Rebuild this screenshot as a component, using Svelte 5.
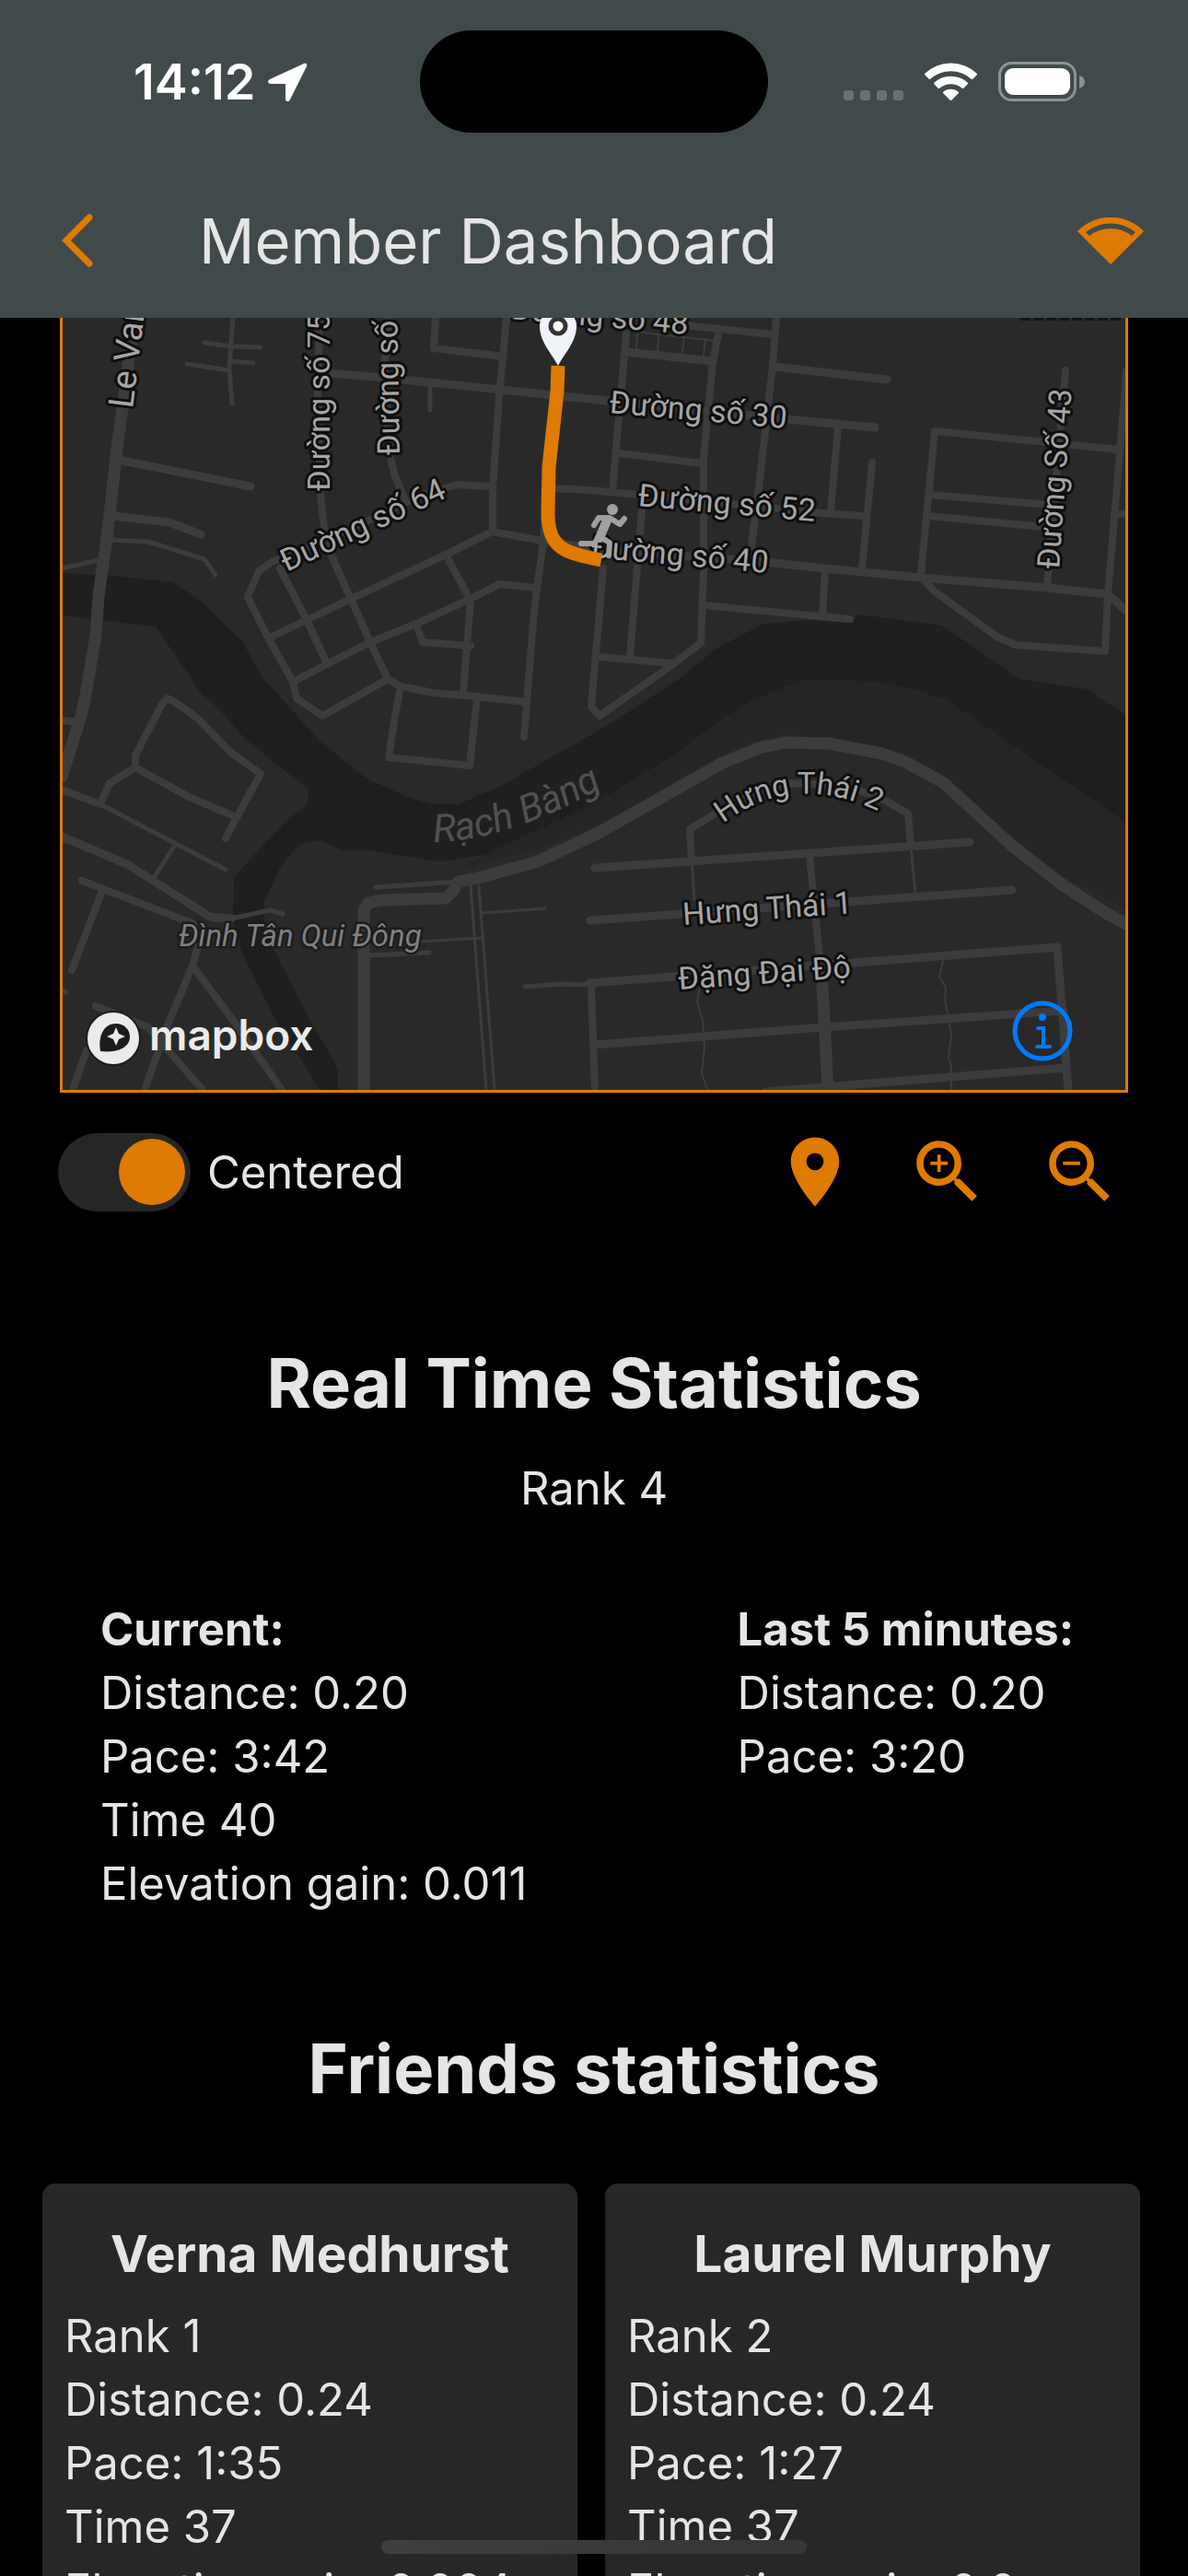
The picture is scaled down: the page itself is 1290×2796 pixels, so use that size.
<script>
    let centered = $state(true);

    const current = ['Distance: 0.20', 'Pace: 3:42', 'Time 40', 'Elevation gain: 0.011'];
    const lastMinutes = ['Distance: 0.20', 'Pace: 3:20'];

    const friends = [
        { name: 'Verna Medhurst', stats: ['Rank 1', 'Distance: 0.24', 'Pace: 1:35', 'Time 37', 'Elevation gain: 0.004'] },
        { name: 'Laurel Murphy', stats: ['Rank 2', 'Distance: 0.24', 'Pace: 1:27', 'Time 37', 'Elevation gain: 0.0'] }
    ];

    // Roads grouped by stroke width
    const roads = [
        { width: 2, lines: [
            '761,1067 757,1087 763,1107 765,1137 762,1165 768,1182',
            '1024,1043 1020,1060 1027,1072 1026,1085 1033,1123 1030,1147 1033,1157 1033,1183',
            '692,362 691,378', '715,365 714,381', '743,365 741,382', '766,368 764,386', '690,360 776,370'
        ] },
        { width: 3, lines: [
            '511,962 528,1183', '520,962 537,1183', '523,991 592,986', '458,1022 524,1018',
            '989,918 994,970', '751,933 754,977'
        ] },
        { width: 5, lines: [
            '253,345 249,400 252,438', '222,372 251,376 283,377', '203,395 249,402', '251,392 275,394',
            '119,586 161,588 222,607 234,624', '67,617 107,608', '467,420 467,445',
            '109,873 245,944', '190,917 167,953', '251,997 293,988 307,992', '408,963 498,957',
            '400,1037 466,1034', '570,1071 609,1068 637,1069', '67,1074 72,1077'
        ] },
        { width: 8, lines: [
            '347,345 345,430 348,537 354,590 381,650 402,697 421,737 435,745 471,752 517,756 572,762',
            '423,345 417,397 423,493 429,517 440,543',
            '534,528 496,526 456,538 394,568 295,610 281,620 269,648 291,692 318,740 322,758 350,777 421,737',
            '304,617 333,673 354,718', '293,692 381,650 484,602 534,577 590,587',
            '484,602 511,652 503,752', '318,740 402,697 452,677 511,650 542,634 582,638',
            '452,678 459,697 511,701', '473,345 471,378 547,387', '550,345 542,430 535,530 535,577',
            '601,530 640,532 695,537 893,557 938,560', '601,430 590,587 580,663 569,800',
            '435,745 429,777 422,822 510,831 518,757',
            '655,617 642,767 651,777 728,723 761,698 764,620 764,497 774,393 780,362',
            '651,713 730,720', '680,362 665,533', '743,353 839,363', '843,345 839,397 824,530 816,593',
            '673,492 762,503', '910,463 902,555', '947,502 936,618', '697,553 684,713',
            '764,657 923,672', '896,620 893,667', '1215,488 1015,468 1000,623',
            '1009,537 1141,548', '1009,560 1134,572', '1157,402 1137,637',
            '1223,403 1216,490 1203,645 1200,707 1103,700 1084,692 1015,642 1000,627', '1214,558 1223,558',
            '67,782 78,783', '109,872 119,850 147,833 147,820 176,764 182,758 190,762 215,780 251,817 283,840 257,887 245,910',
            '147,833 205,865 257,887', '67,857 109,873', '89,956 211,1003', '111,967 78,1053',
            '215,1027 209,1048 182,1113 157,1183', '209,1048 255,1110 306,1183',
            '104,1092 161,1115 220,1183', '94,1140 79,1183',
            '751,933 749,900 782,880 824,858 854,850 916,852 958,867 986,883 989,918',
            '879,928 893,1070', '642,1072 646,1182'
        ] },
        { width: 9, lines: [
            '128,499 272,528', '123,560 184,567 218,580', '356,405 417,410 544,423 659,435 854,455 950,464',
            '680,382 774,392', '841,398 963,412', '590,587 655,597 831,610 896,617 1000,627 1137,638 1203,645 1223,663',
            '67,908 138,938 228,995 251,997', '646,942 1053,914', '641,999 1099,966',
            '640,1067 1148,1028 1160,1183', '646,1134 894,1115 1155,1097', '831,1185 1157,1159'
        ] },
        { width: 13, lines: [
            '146,345 140,390 127,487 117,577 107,647 104,690 92,760 88,777 67,843', '893,1070 899,1183',
            '395,1183 395,988 400,980 414,977 484,975 492,967 498,957 519,953 584,935 650,904 785,828 824,812 852,806 900,807 958,818 983,827 1025,850 1099,918 1153,960 1199,990 1223,1003'
        ] }
    ];

    const labels = [
        { text: 'Le Van', x: 144, y: 444, angle: -83, size: 38 },
        { text: 'Đường số 75', x: 358, y: 533, angle: -90 },
        { text: 'Đường số 73', x: 434, y: 494, angle: -91 },
        { text: 'Đường số 64', x: 311, y: 621, angle: -25 },
        { text: 'Đường số 48', x: 554, y: 346, angle: 5 },
        { text: 'Đường số 30', x: 661, y: 448, angle: 5 },
        { text: 'Đường số 52', x: 692, y: 549, angle: 5 },
        { text: 'Đường số 40', x: 641, y: 605, angle: 5 },
        { text: 'Đường Số 43', x: 1150, y: 618, angle: -86 },
        { text: 'Hưng Thái 1', x: 742, y: 1004, angle: -4 },
        { text: 'Đặng Đại Độ', x: 737, y: 1074, angle: -4 }
    ];
</script>

<div class="screen">
    <header>
        <div class="status-bar">
            <div class="status-left">
                <span class="time">14:12</span>
                <svg width="44" height="42" viewBox="0 0 44 42" fill="#fff" aria-hidden="true">
                    <path d="M39 1 2 18c-3 2-2 5 1 5h15c1 0 1 0 1 1v15c0 4 4 4 5 1L42 4c1-3-1-4-3-3z" />
                </svg>
            </div>
            <div class="island"></div>
            <div class="status-right">
                <svg width="262" height="44" viewBox="0 0 262 44" aria-hidden="true">
                    <g fill="#697172">
                        <rect x="0" y="31" width="11" height="11" rx="3" />
                        <rect x="18" y="31" width="11" height="11" rx="3" />
                        <rect x="36" y="31" width="11" height="11" rx="3" />
                        <rect x="54" y="31" width="11" height="11" rx="3" />
                    </g>
                    <g fill="#fff">
                        <path d="M88 13a41 41 0 0 1 57 0v1l-5 5h-1a33 33 0 0 0-45 0h-1l-5-5z" />
                        <path d="M98 23a27 27 0 0 1 37 0v1l-5 5h-1a19 19 0 0 0-25 0h-1l-5-5z" />
                        <path d="M108 33a13 13 0 0 1 17 0v1l-8 8h-1l-8-8z" />
                        <rect x="175" y="7" width="71" height="29" rx="9" />
                    </g>
                    <rect x="169.5" y="1.5" width="82" height="40" rx="13" fill="none" stroke="#8d9293" stroke-width="3" />
                    <path d="M256 15c8 3 8 11 0 14z" fill="#8d9293" />
                </svg>
            </div>
        </div>
        <div class="app-bar">
            <button class="back" aria-label="Back">
                <svg width="34" height="58" viewBox="0 0 34 58" fill="none" stroke="#df7a03" stroke-width="7" stroke-linecap="round" stroke-linejoin="miter" aria-hidden="true">
                    <path d="M30 4 5 29l25 25" />
                </svg>
            </button>
            <h1>Member Dashboard</h1>
            <button class="signal" aria-label="Connection">
                <svg width="72" height="51" viewBox="0 0 72 51" fill="#df7a03" fill-rule="evenodd" aria-hidden="true">
                    <path d="M0 15a50 50 0 0 1 72 0L36 51zM9 16l4 4a37 37 0 0 1 46 0l4-4a43 43 0 0 0-54 0z" />
                </svg>
            </button>
        </div>
    </header>

    <main>
        <section class="map">
            <svg class="map-canvas" viewBox="68 345 1154 838" role="img" aria-label="Route map">
                <path class="water" d="M67 622 120 625 188 632 215 650 262 695 285 735 318 772 348 805 398 845 442 865 469 873 498 873 544 853 650 793 690 768 743 733 776 705 829 677 877 673 923 676 933 667 1023 679 1107 737 1180 748 1223 777V893L1055 778 1028 760 988 747 940 739 872 738 812 762 785 780 728 822 640 875 525 928 477 935 400 923 371 923 348 912 324 917 304 942 287 978 287 1000 297 1030 331 1097 367 1160V1183H348L301 1110 264 1037 253 1000 254 953 272 932 310 892 333 874 335 857 266 802 238 770 218 752 169 680 67 668z" />
                <path class="bank" d="M1223 893 1055 778 1028 760 988 747 940 739 872 738 812 762 785 780 728 822 640 875 525 928 502 943 590 920 650 895 782 820 816 805 850 798 904 800 984 818 1027 843 1099 908 1153 950 1223 987z" />

                {#each roads as group}
                    <g class="roads" stroke-width={group.width}>
                        {#each group.lines as points}
                            <polyline {points} />
                        {/each}
                    </g>
                {/each}

                <path d="M1108 346H1218" stroke="#141414" stroke-width="4" stroke-dasharray="11 3" />

                {#each labels as label}
                    <text class="street" font-size={label.size ?? 34} transform="translate({label.x} {label.y}) rotate({label.angle})">{label.text}</text>
                {/each}

                <path id="hung-thai" d="M785 894Q866 832 968 888" fill="none" />
                <text class="street" font-size="33"><textPath href="#hung-thai">Hưng Thái 2</textPath></text>
                <path id="rach-bang" d="M471 914Q560 912 672 844" fill="none" />
                <text class="river" font-size="42"><textPath href="#rach-bang">Rạch Bàng</textPath></text>
                <text class="place" font-size="33" x="194" y="1027">Đình Tân Qui Đông</text>

                <g fill="none" stroke="#a0a0a0" stroke-width="6" stroke-linecap="round" stroke-linejoin="round">
                    <circle cx="665" cy="553" r="6" fill="#a0a0a0" stroke="none" />
                    <path d="M645 570 650 562H662L673 569 678 563" />
                    <path d="M659 565 651 584" stroke-width="10" />
                    <path d="M650 583 645 590H631M652 583 662 589 661 603" />
                </g>

                <path d="M606 397 605 425 596 507 595 557C595 596 614 600 653 608" fill="none" stroke="#df7a03" stroke-width="15" />
                <path d="M606 397C600 385 586 371 586 354 586 330 626 330 626 354 626 371 612 385 606 397z" fill="#eff3f9" />
                <circle cx="606" cy="354" r="8" fill="#fff" stroke="#333" stroke-width="5" />
            </svg>

            <a class="mapbox" href="#mapbox">
                <svg width="60" height="60" viewBox="0 0 60 60" aria-hidden="true">
                    <circle cx="30" cy="30" r="29" fill="#ebebeb" stroke="#1c1c1c" stroke-width="2" />
                    <path d="M16 44C13 27 20 14 33 14c9 0 15 7 15 14 0 13-15 18-32 16z" fill="#1c1c1c" />
                    <path d="M33 18l3 7 7 3-7 3-3 7-3-7-7-3 7-3z" fill="#ebebeb" />
                </svg>
                <span>mapbox</span>
            </a>
            <button class="info" aria-label="Map information">
                <svg width="66" height="66" viewBox="0 0 66 66" fill="none" stroke="#007aff" stroke-width="5" stroke-linecap="round" aria-hidden="true">
                    <circle cx="33" cy="33" r="30" />
                    <circle cx="33" cy="18" r="4" fill="#007aff" stroke="none" />
                    <path d="M28 30h6v19M27 50h14" stroke-width="4" />
                </svg>
            </button>
        </section>

        <div class="controls">
            <label>
                <input type="checkbox" role="switch" bind:checked={centered} />
                Centered
            </label>
            <div class="actions">
                <button aria-label="Show location">
                    <svg viewBox="0 0 24 24" aria-hidden="true">
                        <path d="M12 2C8.13 2 5 5.13 5 9c0 5.25 7 13 7 13s7-7.75 7-13c0-3.87-3.13-7-7-7zm0 9.5a2.5 2.5 0 0 1 0-5 2.5 2.5 0 0 1 0 5z" />
                    </svg>
                </button>
                <button aria-label="Zoom in">
                    <svg viewBox="0 0 24 24" aria-hidden="true">
                        <path d="M15.5 14h-.79l-.28-.27C15.41 12.59 16 11.11 16 9.5 16 5.91 13.09 3 9.5 3S3 5.91 3 9.5 5.91 16 9.5 16c1.61 0 3.09-.59 4.23-1.57l.27.28v.79l5 4.99L20.49 19l-4.99-5zm-6 0C7.01 14 5 11.99 5 9.5S7.01 5 9.5 5 14 7.01 14 9.5 11.99 14 9.5 14z" />
                        <path d="M12 10h-2v2H9v-2H7V9h2V7h1v2h2v1z" />
                    </svg>
                </button>
                <button aria-label="Zoom out">
                    <svg viewBox="0 0 24 24" aria-hidden="true">
                        <path d="M15.5 14h-.79l-.28-.27C15.41 12.59 16 11.11 16 9.5 16 5.91 13.09 3 9.5 3S3 5.91 3 9.5 5.91 16 9.5 16c1.61 0 3.09-.59 4.23-1.57l.27.28v.79l5 4.99L20.49 19l-4.99-5zm-6 0C7.01 14 5 11.99 5 9.5S7.01 5 9.5 5 14 7.01 14 9.5 11.99 14 9.5 14z" />
                        <path d="M7 9h5v1H7z" />
                    </svg>
                </button>
            </div>
        </div>

        <section>
            <h2>Real Time Statistics</h2>
            <p class="rank">Rank 4</p>
            <div class="stats">
                <div>
                    <h3>Current:</h3>
                    {#each current as line}
                        <p>{line}</p>
                    {/each}
                </div>
                <div>
                    <h3>Last 5 minutes:</h3>
                    {#each lastMinutes as line}
                        <p>{line}</p>
                    {/each}
                </div>
            </div>
        </section>

        <section>
            <h2>Friends statistics</h2>
            <div class="friends">
                {#each friends as friend}
                    <article>
                        <h3>{friend.name}</h3>
                        {#each friend.stats as line}
                            <p>{line}</p>
                        {/each}
                    </article>
                {/each}
            </div>
        </section>
    </main>

    <div class="home-indicator"></div>
</div>

<style>
    :global(body) {
        background-color: #000;
    }

    .screen {
        height: 100vh;
        overflow: hidden;
        position: relative;
        color: #e5e5e5;
        background-color: #000;
        font-family: Inter, Roboto, sans-serif;
        font-size: 49px;
        line-height: 69px;
    }

    h1, h2, h3, p {
        margin: 0;
    }

    button {
        display: flex;
        align-items: center;
        justify-content: center;
        padding: 0;
        border: none;
        background: none;
        cursor: pointer;
    }

    header {
        background-color: #414a4b;
    }

    .status-bar {
        display: grid;
        grid-template-columns: 1fr 378px 1fr;
        align-items: center;
        padding: 33px 0;
    }

    .status-left {
        display: flex;
        align-items: center;
        gap: 13px;
        padding-left: 145px;
    }

    .time {
        font-size: 54px;
        font-weight: 600;
        color: #fff;
    }

    .island {
        height: 111px;
        border-radius: 56px;
        background-color: #000;
    }

    .status-right {
        display: flex;
        justify-content: flex-end;
        padding-right: 112px;
    }

    .app-bar {
        display: flex;
        align-items: center;
        height: 168px;
        padding-right: 12px;
    }

    .back {
        width: 168px;
        height: 144px;
    }

    .signal {
        width: 144px;
        height: 144px;
    }

    h1 {
        flex: 1;
        padding-left: 48px;
        font-size: 67px;
        font-weight: 400;
    }

    .map {
        position: relative;
        margin: 0 65px;
        border: 3px solid #df7a03;
        border-top: none;
        background-color: #292929;
    }

    .map-canvas {
        display: block;
        width: 100%;
        height: auto;
        font-family: Roboto, "Noto Sans", sans-serif;
    }

    .water {
        fill: #1f1f1f;
    }

    .bank {
        fill: #272425;
    }

    .roads {
        fill: none;
        stroke: #3c3c3c;
        stroke-linecap: round;
        stroke-linejoin: round;
    }

    .street {
        fill: #a6a6a6;
        stroke: #0e0e0e;
        stroke-width: 6px;
        stroke-linejoin: round;
        paint-order: stroke;
    }

    .river {
        fill: #515151;
        font-style: italic;
    }

    .place {
        fill: #808080;
        stroke: #1c1c1c;
        stroke-width: 5px;
        paint-order: stroke;
        font-style: italic;
    }

    .mapbox {
        position: absolute;
        left: 25px;
        bottom: 26px;
        display: flex;
        align-items: center;
        gap: 9px;
        height: 60px;
        color: #ebebeb;
        font-size: 46px;
        font-weight: 600;
        text-decoration: none;
    }

    .mapbox span {
        padding-bottom: 8px;
    }

    .info {
        position: absolute;
        right: 57px;
        bottom: 31px;
    }

    .controls {
        display: flex;
        align-items: center;
        justify-content: space-between;
        margin-top: 14px;
        padding: 0 45px 0 63px;
    }

    .controls label {
        display: flex;
        align-items: center;
        gap: 18px;
    }

    .controls input {
        appearance: none;
        display: flex;
        align-items: center;
        width: 144px;
        height: 85px;
        margin: 0;
        padding: 0 6px;
        box-sizing: border-box;
        border-radius: 43px;
        background-color: #262626;
    }

    .controls input::before {
        content: "";
        width: 72px;
        height: 72px;
        border-radius: 50%;
        background-color: #df7a03;
    }

    .controls input:checked {
        justify-content: flex-end;
    }

    .actions {
        display: flex;
    }

    .actions button {
        width: 144px;
        height: 144px;
    }

    .actions svg {
        width: 90px;
        height: 90px;
        fill: #df7a03;
    }

    h2 {
        margin-top: 115px;
        font-size: 74px;
        font-weight: 700;
        line-height: 84px;
        text-align: center;
    }

    .rank {
        margin-top: 38px;
        text-align: center;
    }

    .stats {
        display: grid;
        grid-template-columns: 20fr 11fr;
        margin-top: 84px;
        padding: 0 109px;
    }

    h3 {
        font-size: 49px;
        font-weight: 700;
    }

    section + section h2 {
        margin-top: 124px;
    }

    .friends {
        display: grid;
        grid-template-columns: 1fr 1fr;
        gap: 30px;
        margin-top: 83px;
        padding: 0 52px 0 46px;
    }

    article {
        padding: 37px 24px;
        border-radius: 14px;
        background-color: #272727;
    }

    article h3 {
        margin-bottom: 16px;
        font-size: 55px;
        line-height: 78px;
        text-align: center;
    }

    .home-indicator {
        position: absolute;
        bottom: 24px;
        left: 50%;
        width: 462px;
        height: 15px;
        margin-left: -231px;
        border-radius: 8px;
        background: linear-gradient(to right, #3f3f3f, #363636);
    }
</style>
